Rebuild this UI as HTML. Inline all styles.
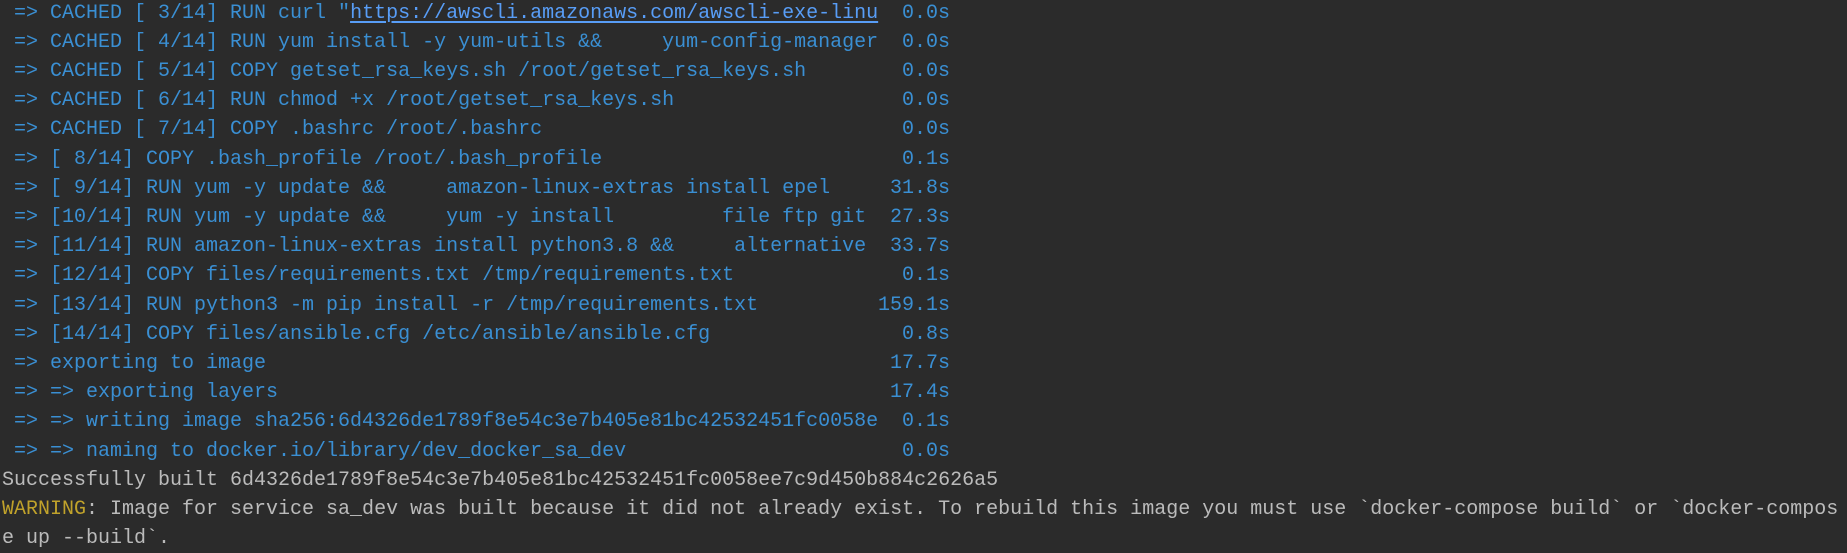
<!DOCTYPE html>
<html><head><meta charset="utf-8"><style>
html,body{margin:0;padding:0;background:#2b2b2b;width:1847px;height:548px;overflow:hidden}
#t{position:absolute;left:2px;top:-1.3px;font-family:"Liberation Mono",monospace;font-size:20px;line-height:29.2px;color:#3a8fd3}
.l{position:relative;height:29.2px;width:948px;white-space:pre}
.tm{position:absolute;right:0;top:0}
.u{color:#589df6;text-decoration:underline;text-underline-offset:3px}
.w{color:#bbbbbb;width:1847px}
.y{color:#c0a22b}
</style></head><body><div id="t"><div class="l"> =&gt; CACHED [ 3/14] RUN curl "<span class="u">https://awscli.amazonaws.com/awscli-exe-linu</span><span class="tm">0.0s</span></div><div class="l"> =&gt; CACHED [ 4/14] RUN yum install -y yum-utils &amp;&amp;     yum-config-manager<span class="tm">0.0s</span></div><div class="l"> =&gt; CACHED [ 5/14] COPY getset_rsa_keys.sh /root/getset_rsa_keys.sh<span class="tm">0.0s</span></div><div class="l"> =&gt; CACHED [ 6/14] RUN chmod +x /root/getset_rsa_keys.sh<span class="tm">0.0s</span></div><div class="l"> =&gt; CACHED [ 7/14] COPY .bashrc /root/.bashrc<span class="tm">0.0s</span></div><div class="l"> =&gt; [ 8/14] COPY .bash_profile /root/.bash_profile<span class="tm">0.1s</span></div><div class="l"> =&gt; [ 9/14] RUN yum -y update &amp;&amp;     amazon-linux-extras install epel<span class="tm">31.8s</span></div><div class="l"> =&gt; [10/14] RUN yum -y update &amp;&amp;     yum -y install         file ftp git<span class="tm">27.3s</span></div><div class="l"> =&gt; [11/14] RUN amazon-linux-extras install python3.8 &amp;&amp;     alternative<span class="tm">33.7s</span></div><div class="l"> =&gt; [12/14] COPY files/requirements.txt /tmp/requirements.txt<span class="tm">0.1s</span></div><div class="l"> =&gt; [13/14] RUN python3 -m pip install -r /tmp/requirements.txt<span class="tm">159.1s</span></div><div class="l"> =&gt; [14/14] COPY files/ansible.cfg /etc/ansible/ansible.cfg<span class="tm">0.8s</span></div><div class="l"> =&gt; exporting to image<span class="tm">17.7s</span></div><div class="l"> =&gt; =&gt; exporting layers<span class="tm">17.4s</span></div><div class="l"> =&gt; =&gt; writing image sha256:6d4326de1789f8e54c3e7b405e81bc42532451fc0058e<span class="tm">0.1s</span></div><div class="l"> =&gt; =&gt; naming to docker.io/library/dev_docker_sa_dev<span class="tm">0.0s</span></div><div class="l w">Successfully built 6d4326de1789f8e54c3e7b405e81bc42532451fc0058ee7c9d450b884c2626a5</div><div class="l w"><span class="y">WARNING</span>: Image for service sa_dev was built because it did not already exist. To rebuild this image you must use `docker-compose build` or `docker-compos</div><div class="l w">e up --build`.</div></div></body></html>
